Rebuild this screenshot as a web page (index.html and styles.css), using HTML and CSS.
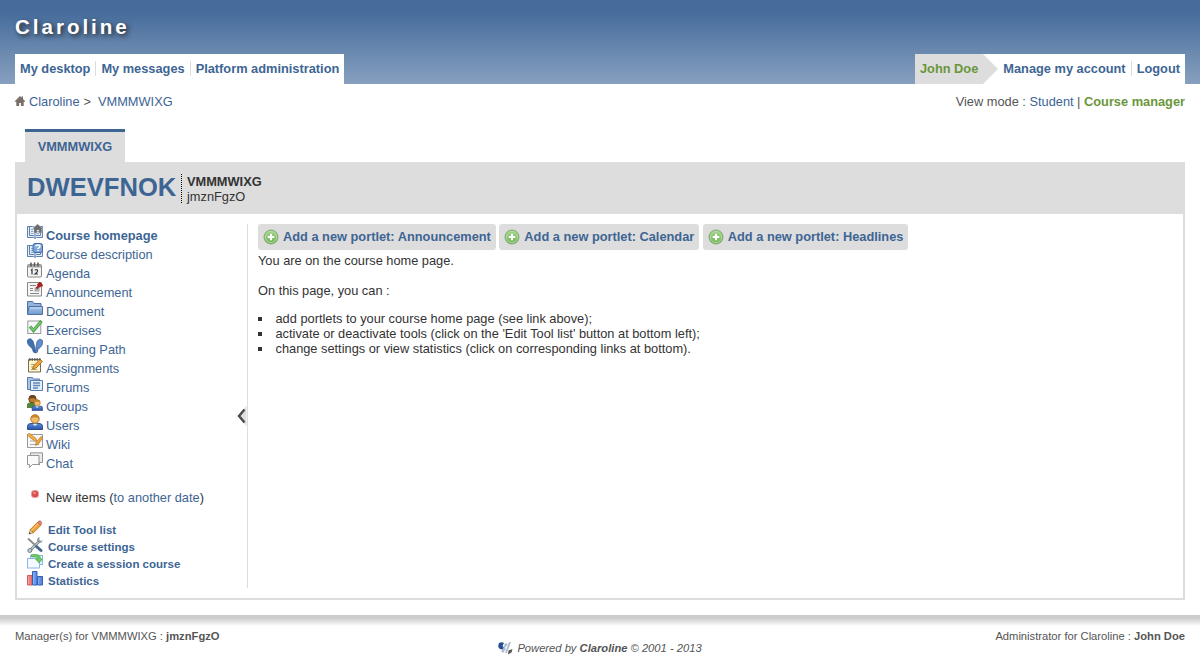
FILE: index.html
```html
<!DOCTYPE html>
<html lang="en">
<head>
<meta charset="utf-8">
<title>Claroline</title>
<link rel="stylesheet" href="styles.css">
</head>
<body>
<svg class="defs" aria-hidden="true">
  <defs>
    <linearGradient id="green" x1="0" y1="0" x2="0" y2="1"><stop offset="0" stop-color="#a6d68c"/><stop offset="1" stop-color="#6fb354"/></linearGradient>
    <linearGradient id="folder" x1="0" y1="0" x2="0" y2="1"><stop offset="0" stop-color="#a9c6e8"/><stop offset="1" stop-color="#6f9ace"/></linearGradient>
    <linearGradient id="shirt" x1="0" y1="0" x2="0" y2="1"><stop offset="0" stop-color="#5e8fdb"/><stop offset="1" stop-color="#2854a4"/></linearGradient>
    <symbol id="book" viewBox="0 0 16 16">
      <path d="M.5 2.500h5l2.500.7 2.500-.7h5v11h-6l-1.500 1-1.500-1h-6z" fill="#e4edf8" stroke="#5b80b0"/>
      <path d="M8 3v11M2.500 3v8.500h4.500M13.500 3v8.500H9" fill="none" stroke="#5b80b0"/>
      <path d="M4 5.500h2.500M4 7.500h2.500M4 9.500h2.500M9.500 7.500H12M9.500 9.500H12" stroke="#88a4c9"/>
    </symbol>
    <symbol id="person" viewBox="0 0 16 16">
      <path d="M.5 15.500v-3.300q0-2.700 3.500-2.700h8q3.500 0 3.500 2.700v3.300z" fill="url(#shirt)" stroke="#2b4f8d"/>
      <path d="M5.500 9.700 8 12l2.500-2.300z" fill="#e4edf9"/>
      <circle cx="8" cy="5" r="4.200" fill="#f0bb67" stroke="#b57a2c"/>
      <path d="M3.800 4.500q0-4 4.200-4t4.200 4q-4.200-2.300-8.400 0z" fill="#c48430"/>
    </symbol>
    <symbol id="add" viewBox="0 0 16 16">
      <circle cx="8" cy="8" r="7" fill="url(#green)" stroke="#84a876"/>
      <circle cx="8" cy="8" r="5.600" fill="none" stroke="#b8dda6" stroke-width=".8"/>
      <path d="M8 4.700v6.600M4.700 8h6.600" stroke="#fff" stroke-width="2"/>
    </symbol>
    <symbol id="pencil" viewBox="0 0 16 16">
      <path d="M2 14l1.300-4.500 3.200 3.200z" fill="#e9cfa2" stroke="#8d6537" stroke-width=".7"/>
      <path d="M3.300 9.500 10.500 2.300l3.200 3.200-7.200 7.200z" fill="#f3a33c" stroke="#b87022" stroke-width=".8"/>
      <path d="M4.500 10.400 11.500 3.500" stroke="#fbd186"/>
      <path d="M10.500 2.300 12 1q1-.6 2 .4t.6 2l-1 2z" fill="#dc8272" stroke="#ad6250" stroke-width=".6"/>
      <path d="M2 14l.5-1.700 1.200 1.200z" fill="#333"/>
    </symbol>
  </defs>
</svg>

<header class="top">
  <div class="site">Claroline</div>
  <div class="bars">
    <nav class="bar">
      <a>My desktop</a><a>My messages</a><a>Platform administration</a>
    </nav>
    <nav class="bar account">
      <span class="user">John Doe</span><svg class="arrow" viewBox="0 0 15 30"><path d="M0 0l15 15L0 30z"/></svg>
      <a>Manage my account</a><a>Logout</a>
    </nav>
  </div>
</header>

<div class="crumbs">
  <div class="path">
    <svg class="home" viewBox="0 0 10 10"><path d="M5 0 6.500 1.500V.5H8V3l2 2v.8H8.700V10H6V7H4.200v3H1.300V5.800H0V5z" fill="#7a6e68"/></svg>
    <a>Claroline</a><span class="gt">&gt;</span><a>VMMMWIXG</a>
  </div>
  <div class="mode">View mode : <a>Student</a> | <b>Course manager</b></div>
</div>

<main class="course">
  <div class="tab">VMMMWIXG</div>
  <div class="title">
    <h1>DWEVFNOK</h1>
    <div class="info"><b>VMMMWIXG</b><span>jmznFgzO</span></div>
  </div>
  <div class="panel">
    <aside class="side">
      <ul class="tools">
        <li class="current"><svg viewBox="0 0 16 16"><use href="#book"/><path d="M10.500 0l5.500 4.800h-1.200V9h-3V6H10v3H7V4.800H5.500z" fill="#6c6c6c" stroke="#d5d5d5" stroke-width=".4"/></svg><a>Course homepage</a></li>
        <li><svg viewBox="0 0 16 16"><use href="#book"/><rect x="6" y=".5" width="9.500" height="9" rx="2" fill="#7fa6d8" stroke="#3e69a5"/><path d="M9 3.500q0-1.500 2-1.500t2 1.600Q13 4.700 11 5.400V6M11 7v1.300" fill="none" stroke="#fff" stroke-width="1.400"/></svg><a>Course description</a></li>
        <li><svg viewBox="0 0 16 16"><rect x=".5" y="2.500" width="14" height="12.500" rx="1" fill="#f4f4f4" stroke="#888"/><path d="M1 2.500h13v3H1z" fill="#aaa"/><path d="M4 .5v4M7.500.5v4M11 .5v4" stroke="#555" stroke-width="1.500"/><path d="M4 8.500l1-1v5M8 8.500q0-1 1.300-1t1.300 1.200Q10.600 10 8 12h3" fill="none" stroke="#333" stroke-width="1.200"/></svg><a>Agenda</a></li>
        <li><svg viewBox="0 0 16 16"><path d="M.5 1.500h14v13.500H.5z" fill="#f5f5f5" stroke="#888"/><path d="M3 4.500h6M3 7.500h3M3 9.500h3M3 12.500h9" stroke="#888"/><path d="M7.500 6.500h5v4h-5z" fill="#aaa"/><path d="M12 1.500 15.500 5M10.500 3l3 3M13 3.500 9.500 7.500" stroke="#a81d1d" stroke-width="2"/></svg><a>Announcement</a></li>
        <li><svg viewBox="0 0 16 16"><path d="M.5 14V1.500h5l1.500 2h7V14z" fill="#94b4db" stroke="#4b72a5"/><path d="M.5 14.500l1.500-8h13.500v8z" fill="url(#folder)" stroke="#4b72a5"/><path d="M3 8h11.500" stroke="#c6dbf1"/></svg><a>Document</a></li>
        <li><svg viewBox="0 0 16 16"><rect x=".8" y="2" width="13" height="12.500" fill="#f7f7f7" stroke="#999"/><path d="M3 7.500l3.500 4 8-9.500" fill="none" stroke="#429b45" stroke-width="3.200"/><path d="M3.300 7.700l3.200 3.500 7.300-8.500" fill="none" stroke="#7ccb72" stroke-width="1.600"/></svg><a>Exercises</a></li>
        <li><svg viewBox="0 0 16 16"><g fill="#426fae" stroke="#315b98" stroke-width=".7"><path d="M.5 2q3-3 5.500 1l2 7-2.500 1L1.500 7Q-.5 3.500.5 2zM5.500 11.500l2.500-1 .5 4q-2.500.8-3-3z"/><path d="M15.500 2.500q-3-3-5.500 1L8.800 10.500l2.400.9L14.500 8q2-3 1-5.500zM8.500 11.300l2.500.7q-.3 3.300-2.700 3z" fill="#5f8dca"/></g></svg><a>Learning Path</a></li>
        <li><svg viewBox="0 0 16 16"><path d="M1.500 2.500h12v12.500h-12z" fill="#fff3c9" stroke="#766d55"/><path d="M2 2.500h11.500" stroke="#555" stroke-width="2.600" stroke-dasharray="1.500 1"/><path d="M4 7.500h6M4 10h5M4 12.500h6" stroke="#bba972"/><path d="M5.500 12l1-3L13 2.500l2.500 2L9 11z" fill="#f2a83a" stroke="#94601d" stroke-width=".8"/></svg><a>Assignments</a></li>
        <li><svg viewBox="0 0 16 16"><path d="M.5 13.500V1.500h5l1 1.500h6v10.500z" fill="#aac6e7" stroke="#587dab"/><path d="M3.500 4.500h12v10h-12z" fill="#e3edf8" stroke="#587dab"/><path d="M6 7h7M6 9.500h7M6 12h5" stroke="#6088b9" stroke-width="1.300"/></svg><a>Forums</a></li>
        <li><svg viewBox="0 0 16 16"><path d="M0 13V10q0-2.500 3-2.500h5V13z" fill="#53863c"/><circle cx="5.500" cy="4.200" r="3.700" fill="#ba7d2d" stroke="#6c4521"/><path d="M1.800 4.200Q1.800 0 5.500 0t3.700 4.200Q5.500 1.700 1.800 4.200z" fill="#674326"/><use href="#person" x="4.500" y="4" width="11.500" height="12"/></svg><a>Groups</a></li>
        <li><svg viewBox="0 0 16 16"><use href="#person"/></svg><a>Users</a></li>
        <li><svg viewBox="0 0 16 16"><path d="M.5 1.500h15v13H.5z" fill="#f8f8f8" stroke="#999"/><path d="M3 5h5M3 8h6M3 11.500h9" stroke="#aaa"/><path d="M0 2l2-2 7 5.500 1 3-3-1z" fill="#f4ae3c" stroke="#b77d31" stroke-width=".7"/><path d="M16 4.500l-2-1-5 6-.5 3 2.800-1.300z" fill="#f0a23a" stroke="#b77d31" stroke-width=".7"/></svg><a>Wiki</a></li>
        <li><svg viewBox="0 0 16 16"><path d="M3.500.8h12v9.700h-3v2.500l-3-2.500h-6z" fill="#e9e9e9" stroke="#969696"/><path d="M.5 3.500h11.500v9H5.500L2.500 15.500v-3h-2z" fill="#fafafa" stroke="#969696"/></svg><a>Chat</a></li>
      </ul>
      <div class="new"><svg viewBox="0 0 8 8"><rect x=".5" y=".5" width="7" height="7" rx="2.500" fill="#d94f4f" stroke="#eb9d9d"/><circle cx="3.500" cy="3" r="1.200" fill="#f19a9a"/></svg>New items (<a>to another date</a>)</div>
      <ul class="manage">
        <li><svg viewBox="0 0 16 16"><use href="#pencil"/></svg><a>Edit Tool list</a></li>
        <li><svg viewBox="0 0 16 16"><path d="M3 13.500 13 3.500" stroke="#727c85" stroke-width="2.800"/><path d="M3.500 13 13 3.500" stroke="#c7ced4" stroke-width="1.200"/><path d="M1 1.500l7 6.500" stroke="#8b8b8b" stroke-width="1.800"/><path d="M9.500 9.500l4.500 4" stroke="#46658d" stroke-width="3" stroke-linecap="round"/><path d="M11.500.5q-2.500 2-1 4t4 1l1.200-2.300-2.400.8-1.300-1.300L13 .5z" fill="#929aa1"/><circle cx="2.800" cy="13.500" r="2" fill="#c5ccd1" stroke="#727c85"/></svg><a>Course settings</a></li>
        <li><svg viewBox="0 0 16 16"><rect x="3.500" y="1.500" width="12" height="9" fill="#e4f1fd" stroke="#8ab8e3"/><rect x=".5" y="4.500" width="12" height="9.500" fill="#f4faff" stroke="#8ab8e3"/><path d="M4.500.5h4.500q4.500 0 4.500 4.500h2L12 9 8.500 5h2q0-2-2-2h-4z" fill="#6bca61" stroke="#49a44a" stroke-width=".6"/></svg><a>Create a session course</a></li>
        <li><svg viewBox="0 0 16 16"><path d="M.5 4.500h4.500v9.500H.500z" fill="#ef7b78" stroke="#cf5b5b"/><path d="M5.500.500h4.500v13.500H5.500z" fill="#6595e8" stroke="#325db5"/><path d="M10.500 5.500h5v8.500h-5z" fill="#5b8be0" stroke="#325db5"/><path d="M6.700 1.500v12M1.700 5.500v8M11.700 6.500v7" stroke="#fff" stroke-opacity=".35"/></svg><a>Statistics</a></li>
      </ul>
      <svg class="toggle" viewBox="0 0 11 20"><path d="M10.500 0v20L2 10z" fill="#dedede"/><path d="M8.500 3.500 3 10l5.500 6.500" fill="none" stroke="#4a4a4a" stroke-width="2.400"/></svg>
    </aside>
    <section class="content">
      <div class="portlets">
        <a><svg viewBox="0 0 16 16"><use href="#add"/></svg>Add a new portlet: Announcement</a>
        <a><svg viewBox="0 0 16 16"><use href="#add"/></svg>Add a new portlet: Calendar</a>
        <a><svg viewBox="0 0 16 16"><use href="#add"/></svg>Add a new portlet: Headlines</a>
      </div>
      <p>You are on the course home page.</p>
      <p class="can">On this page, you can :</p>
      <ul class="hints">
        <li>add portlets to your course home page (see link above);</li>
        <li>activate or deactivate tools (click on the 'Edit Tool list' button at bottom left);</li>
        <li>change settings or view statistics (click on corresponding links at bottom).</li>
      </ul>
    </section>
  </div>
</main>

<footer class="foot">
  <div>Manager(s) for VMMMWIXG : <b>jmznFgzO</b></div>
  <div class="powered"><svg viewBox="0 0 15 13"><path d="M1 1q3-1.500 5 0L4.500 4l2 2-2 1.500Q0 7 .3 3.500z" fill="#274f91"/><path d="M7 1l3 1-3 4 1 1-3 4-2-2 2-2z" fill="#aebfd9"/><path d="M12 0l-4 11" stroke="#b8bfca" stroke-width="2"/><path d="M10.500 8.500l4-1.500-1 3.500-3.500 2z" fill="#555"/></svg><i>Powered by <b>Claroline</b> © 2001 - 2013</i></div>
  <div class="admin">Administrator for Claroline : <b>John Doe</b></div>
</footer>
</body>
</html>
```
FILE: styles.css
```css
* { box-sizing: border-box; }
body { margin: 0; height: 669px; overflow: hidden; background: #fff; color: #333; font: 12.8px/15px "Liberation Sans", Arial, sans-serif; }
ul, p, h1 { margin: 0; padding: 0; }
ul { list-style: none; }
a { color: #3d6594; }
svg { display: block; flex: none; }
.defs { position: absolute; width: 0; height: 0; }

.top { height: 84px; padding: 0 15px; background: linear-gradient(#466c9b 0, #466c9b 12px, #87a0bf 84px); display: flex; flex-direction: column; justify-content: space-between; }
.site { padding-top: 15px; color: #fff; font-size: 20.5px; line-height: 24px; font-weight: bold; letter-spacing: 3px; text-shadow: 2px 2px 5px #222; }
.bars { display: flex; justify-content: space-between; }
.bar { display: flex; align-items: flex-start; height: 30px; background: #fff; font-weight: bold; }
.bar a { margin-top: 7px; padding: 0 5px; height: 15px; }
.bar a + a { border-left: 1px solid #ddd; }
.user { height: 30px; padding: 7px 5px 0; background: #ddd; color: #6a963b; }
.arrow { width: 15px; height: 30px; fill: #ddd; }

.crumbs { display: flex; justify-content: space-between; height: 45px; padding: 10px 15px 0; color: #555; }
.path { display: flex; }
.home { width: 10px; height: 10px; margin: 2px 4px 0 0; }
.gt { margin: 0 7px 0 4px; }
.mode b { color: #6a963b; }

.course { padding: 0 15px; }
.tab { width: 100px; height: 33px; margin-left: 10px; padding-top: 7px; border-top: 3px solid #3d6594; background: #ddd; color: #3d6594; font-weight: bold; text-align: center; }
.title { height: 52px; padding: 12px; background: #ddd; display: flex; }
.title h1 { color: #3d6594; font-size: 25.6px; line-height: 27px; width: 154px; white-space: nowrap; }
.info { display: flex; flex-direction: column; height: 29px; padding-left: 5px; border-left: 1px dotted #000; }
.panel { height: 386px; padding-top: 10px; border: 2px solid #ddd; border-top: 0; display: flex; }
.side { position: relative; width: 231px; height: 364px; padding-left: 10px; border-right: 1px solid #ddd; }
.tools li { display: flex; gap: 3px; height: 19px; }
.tools svg, .manage svg { width: 16px; height: 16px; }
.tools a { padding-top: 4px; }
.current { font-weight: bold; }
.new { display: flex; align-items: center; height: 15px; margin-top: 19px; white-space: pre; }
.new svg { width: 8px; height: 8px; margin: -7px 7px 0 4px; }
.manage { margin-top: 15px; font-size: 11.5px; font-weight: bold; }
.manage li { display: flex; gap: 5px; height: 17px; }
.manage a { padding-top: 3px; }
.toggle { position: absolute; right: 0; top: 182px; width: 11px; height: 20px; }

.content { flex: 1; padding-left: 10px; }
.portlets { display: flex; gap: 3.5px; height: 26px; margin-bottom: 3px; }
.portlets a { display: flex; align-items: center; gap: 4px; padding: 0 5px; border-radius: 3px; background: #ddd; font-weight: bold; line-height: 16px; padding-bottom: 1px; }
.portlets svg { width: 16px; height: 16px; margin-top: 1px; }
.can { margin-top: 15px; }
.hints { margin-top: 13px; }
.hints li { display: flex; align-items: center; }
.hints li::before { content: ""; width: 4px; height: 4px; margin-right: 13.500px; background: #333; }

.foot { display: grid; grid-template-columns: 1fr auto 1fr; margin-top: 15px; height: 54px; padding: 14px 15px 0; background: linear-gradient(#ccc 0, #ccc 3px, #fff 11px); color: #555; font-size: 11.2px; line-height: 14px; }
.powered { display: flex; gap: 4px; padding-top: 12px; }
.powered svg { width: 15px; height: 13px; margin-top: 1px; }
.admin { text-align: right; }
```
